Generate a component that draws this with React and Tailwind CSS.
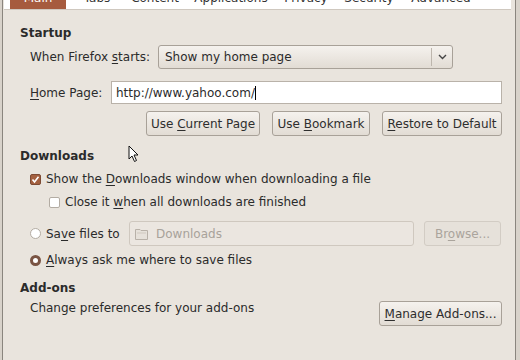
import React from "react";

const font = { fontFamily: '"DejaVu Sans", "Liberation Sans", sans-serif' };

const U = ({ children }) => <span className="underline underline-offset-2">{children}</span>;

const Btn = ({ children, className = "", disabled = false }) => (
  <div
    className={`h-[25px] flex items-center justify-center rounded-[3px] border ${
      disabled
        ? "border-[#d2ccc4] bg-[#e6e1da] text-[#aaa49c]"
        : "border-[#a8a198] bg-gradient-to-b from-[#f5f2ee] to-[#e2dcd4] text-[#2e2e2e]"
    } ${className}`}
  >
    <span>{children}</span>
  </div>
);

const tabs = [
  { label: "Main", w: "w-[56px]", ml: "ml-[6px]" },
  { label: "Tabs", w: "w-[58px]", ml: "ml-[2px]" },
  { label: "Content", w: "w-[58px]", ml: "ml-0" },
  { label: "Applications", w: "w-[82px]", ml: "ml-[6px]" },
  { label: "Privacy", w: "w-[60px]", ml: "ml-[4px]" },
  { label: "Security", w: "w-[62px]", ml: "ml-[2px]" },
  { label: "Advanced", w: "w-[70px]", ml: "ml-[6px]" },
];

export default function App() {
  return (
    <div
      className="w-[520px] h-[360px] overflow-hidden bg-[#d8d2ca] text-[12px] text-[#2b2b2b]"
      style={font}
    >
      <div className="ml-[2px] mr-[4px] h-full bg-[#e9e4dd] border-l border-r border-[#8a857e]">
        {/* tab strip (cut off at top) */}
        <div className="mx-[1px] mr-[4px] h-[10px] bg-white border-b border-[#cfc8bf] flex overflow-hidden">
          {tabs.map((t, i) => (
            <div
              key={t.label}
              className={`${t.w} ${t.ml} h-full flex justify-center ${
                i === 0 ? "bg-[#a65b3e] text-white" : "text-[#333]"
              }`}
            >
              <span className="-mt-[8px] leading-[12px]">{t.label}</span>
            </div>
          ))}
        </div>

        <div className="pl-[17px] pr-[13px]">
          {/* Startup */}
          <div className="mt-[16px] font-bold leading-[14px]">Startup</div>
          <div className="mt-[5px] ml-[10px] flex items-center h-[24px]">
            <span className="w-[128px]">
              When Firefox <U>s</U>tarts:
            </span>
            <div className="w-[295px] h-[24px] flex items-center rounded-[3px] border border-[#a8a198] bg-gradient-to-b from-[#f5f2ee] to-[#e2dcd4]">
              <span className="flex-1 pl-[6px]">Show my home page</span>
              <div className="w-[21px] h-[18px] border-l border-[#bdb6ad] flex items-center justify-center">
                <svg width="9" height="6" viewBox="0 0 9 6">
                  <path d="M1 1 L4.5 4.5 L8 1" fill="none" stroke="#444" strokeWidth="1.4" />
                </svg>
              </div>
            </div>
          </div>

          <div className="mt-[12px] ml-[10px] flex items-center h-[23px]">
            <span className="w-[81px]">
              <U>H</U>ome Page:
            </span>
            <div className="flex-1 h-[23px] bg-white border border-[#b9b2a9] flex items-center pl-[4px]">
              http://www.yahoo.com/
              <span className="inline-block w-px h-[14px] bg-black" />
            </div>
          </div>

          <div className="mt-[7px] flex justify-end gap-[12px]">
            <Btn className="w-[114px]">
              Use <U>C</U>urrent Page
            </Btn>
            <Btn className="w-[98px]">
              Use <U>B</U>ookmark
            </Btn>
            <Btn className="w-[120px]">
              <U>R</U>estore to Default
            </Btn>
          </div>

          {/* Downloads */}
          <div className="mt-[13px] font-bold leading-[14px] flex items-center">
            Downloads
            <svg className="ml-[34px] -mt-[4px]" width="12" height="18" viewBox="0 0 12 18">
              <path d="M1 1 L1 14 L4 11 L6.5 16.5 L8.5 15.5 L6 10 L10 10 Z" fill="#fff" stroke="#111" strokeWidth="1" />
            </svg>
          </div>

          <div className="mt-[7px] ml-[10px] flex items-center h-[18px]">
            <div className="w-[11px] h-[11px] rounded-[2px] bg-[#a4603f] border border-[#7d4a33] flex items-center justify-center">
              <svg width="9" height="9" viewBox="0 0 9 9">
                <path d="M1.5 4.5 L3.5 7 L7.5 1.8" fill="none" stroke="#fff" strokeWidth="1.6" />
              </svg>
            </div>
            <span className="ml-[5px]">
              Show the <U>D</U>ownloads window when downloading a file
            </span>
          </div>

          <div className="mt-[5px] ml-[29px] flex items-center h-[18px]">
            <div className="w-[11px] h-[11px] rounded-[2px] bg-white border border-[#b3aca3]" />
            <span className="ml-[5px]">
              Close it <U>w</U>hen all downloads are finished
            </span>
          </div>

          <div className="mt-[10px] ml-[10px] flex items-center h-[25px]">
            <div className="w-[11px] h-[11px] rounded-full bg-white border border-[#b3aca3]" />
            <span className="ml-[5px] w-[83px]">
              Sa<U>v</U>e files to
            </span>
            <div className="w-[285px] h-[25px] rounded-[3px] border border-[#cfc8bf] bg-[#ebe6e0] flex items-center pl-[5px] text-[#a8a29a]">
              <svg width="13" height="12" viewBox="0 0 13 12">
                <path d="M0.5 1.5 H5 L6 2.5 H12.5 V11.5 H0.5 Z" fill="#e6e1da" stroke="#b8b1a8" />
                <path d="M2 5 H11" stroke="#cfc8bf" />
              </svg>
              <span className="ml-[8px]">Downloads</span>
            </div>
            <Btn disabled className="ml-[10px] w-[77px]">
              Br<U>o</U>wse...
            </Btn>
          </div>

          <div className="mt-[5px] ml-[10px] flex items-center h-[18px]">
            <div className="w-[11px] h-[11px] rounded-full bg-white border-[3px] border-[#7a5443]" />
            <span className="ml-[5px]">
              <U>A</U>lways ask me where to save files
            </span>
          </div>

          {/* Add-ons */}
          <div className="mt-[12px] font-bold leading-[14px]">Add-ons</div>
          <div className="mt-[3px] ml-[10px] flex items-start">
            <span className="flex-1 leading-[16px] mt-[2px]">Change preferences for your add-ons</span>
            <Btn className="mt-[3px] w-[123px]">
              <U>M</U>anage Add-ons...
            </Btn>
          </div>
        </div>
      </div>
    </div>
  );
}
